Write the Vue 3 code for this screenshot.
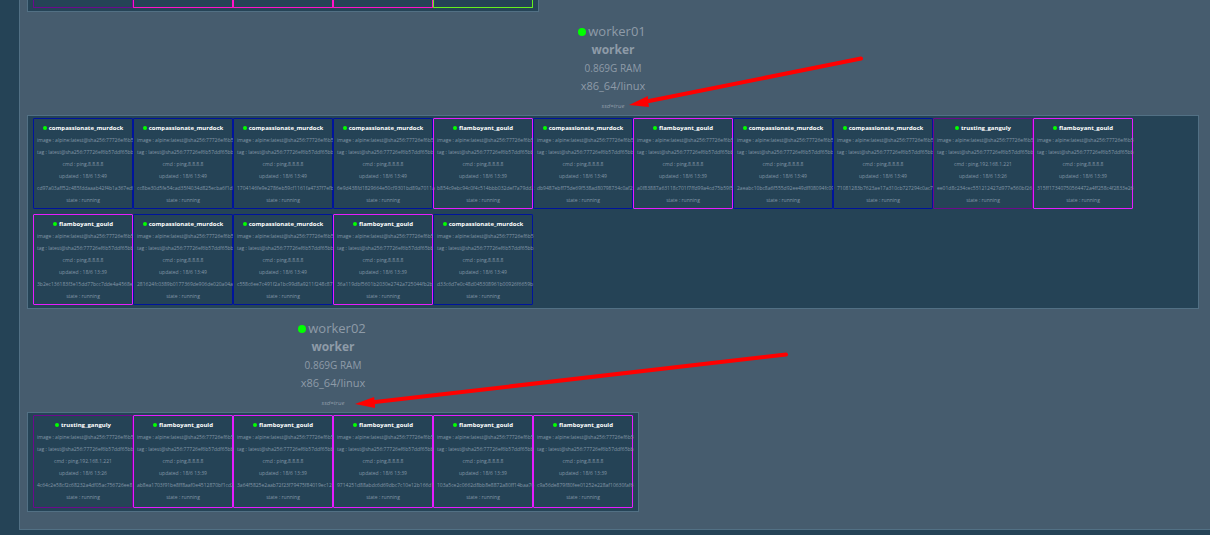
<script setup>
const kinds = {
  c: { name: 'compassionate_murdock', tone: 'blue', cmd: 'ping,8.8.8.8', updated: '18/6 13:49' },
  f: { name: 'flamboyant_gould', tone: 'magenta', cmd: 'ping,8.8.8.8', updated: '18/6 13:39' },
  t: { name: 'trusting_ganguly', tone: 'purple', cmd: 'ping,192.168.1.221', updated: '18/6 13:26' }
}
const task = (kind, id) => ({ ...kinds[kind], id })

const managerTones = ['purple', 'pink', 'pink', 'pink', 'green']

const workers = [
  {
    name: 'worker01',
    arrow: { shaft: 'M248 46.5 L36 89', head: '16,93 35,84 35,89 36,95' },
    tasks: [
      task('c', 'cd97a03aff52c485fddaaab42f4b1a367edf'),
      task('c', 'cc8be30d5fe54cad35f4034d825ecba6f1d'),
      task('c', '1704146fe9e2786eb59cf1161fa4737f7efb'),
      task('c', '6e9d438fd1829664e50cf9301bd89a7011a'),
      task('f', 'b854c9ebc94c0f4c514bbb032def7a79dd2'),
      task('c', 'db9487ebff75de69f538ad80798734c0af2'),
      task('f', 'a0f83887a63118c701f7ffd99a4cd75b59f5'),
      task('c', '2aeabc10bc8a6f555d92ee49dff08094fc09'),
      task('c', '71081283b7623ae17a310cb727294c0ac7'),
      task('t', 'ee01d8c234cec551212427d977e560bf26'),
      task('f', '315ff17340750564472a4ff258c4f2833e26'),
      task('f', '3b2ec136183f3e15dd77bcc7dde4a4568e'),
      task('c', '281624fc0389b0177369de906de020a04a'),
      task('c', 'c558c6ee7c491f2a1bc99d8a9211f248c87'),
      task('f', '36a119dbf5601b2030e2742a725044fb2b'),
      task('c', 'd33c6d7e0c48d045308961b00926f6659b')
    ]
  },
  {
    name: 'worker02',
    roomy: true,
    arrow: { shaft: 'M453 45.5 L42 93', head: '22,95 41,88 42,93 42,99' },
    tasks: [
      task('t', '4c64c2e58cf2c68232a4df05ac756726ee8'),
      task('f', 'ab8ea1703f91be8ff8aaf0e4512870bf1cd2'),
      task('f', '3a64f5825e2aab72f23f79475f84019ec12'),
      task('f', '9714251d88abdc6d69dbc7c10e12b166d1'),
      task('f', '103a5ce2c0662d8bb8e8872a80ff14baa76'),
      task('f', 'c9a56de879f80fee01252e228af10630faf6')
    ]
  }
]
</script>

<template>
  <main class="cluster">
    <div class="box clipped">
      <div v-for="(tone, i) in managerTones" :key="i" class="stub" :class="tone"></div>
    </div>

    <section v-for="w in workers" :key="w.name" class="worker" :class="{ roomy: w.roomy }">
      <header class="head">
        <h2 class="name"><i class="dot"></i>{{ w.name }}</h2>
        <div class="role">worker</div>
        <div class="ram">0.869G RAM</div>
        <div class="arch">x86_64/linux</div>
        <div class="label">ssd=true</div>
        <svg class="arrow" width="1" height="1" aria-hidden="true">
          <path :d="w.arrow.shaft" stroke="#f00" stroke-width="4" stroke-linecap="round" />
          <polygon :points="w.arrow.head" fill="#f00" />
        </svg>
      </header>
      <div class="box">
        <article v-for="t in w.tasks" :key="t.id" class="task" :class="t.tone">
          <h3 class="title"><i class="dot"></i>{{ t.name }}</h3>
          <div>image : alpine:latest@sha256:77726ef6b5</div>
          <div>tag : latest@sha256:77726ef6b57ddf65bb</div>
          <div>cmd : {{ t.cmd }}</div>
          <div>updated : {{ t.updated }}</div>
          <div>{{ t.id }}</div>
          <div>state : running</div>
        </article>
      </div>
    </section>
  </main>
</template>

<style>
body {
  background: #254356;
}
</style>

<style scoped>
.cluster {
  margin-left: 19px;
  padding: 0 11px 17px 7px;
  border: 1px solid #527084;
  border-width: 0 0 1px 1px;
  background: #465c6e;
  color: #8e9ba8;
  font-family: "Open Sans", "Noto Sans", sans-serif;
  overflow: hidden;
}
.worker {
  width: fit-content;
  max-width: 100%;
}
.box {
  box-sizing: border-box;
  display: flex;
  flex-wrap: wrap;
  row-gap: 5px;
  padding: 2px 5px 3px;
  border: 1px solid #527084;
  background: #254356;
}
.clipped {
  width: fit-content;
  padding-top: 0;
  border-top: 0;
}
.stub {
  box-sizing: border-box;
  width: 100px;
  height: 8px;
  border: 1px solid;
  border-top: 0;
  border-radius: 0 0 1px 1px;
}
.head {
  position: relative;
  box-sizing: border-box;
  height: 103px;
  padding-top: 10px;
  text-align: center;
  line-height: 18px;
}
.name {
  display: flex;
  justify-content: center;
  align-items: center;
  gap: 2px;
  margin: 0;
  padding-right: 2px;
  font-size: 13px;
  font-weight: 400;
  line-height: 19px;
}
.name .dot {
  width: 8px;
  height: 8px;
}
.dot {
  border-radius: 50%;
  background: #0f0;
}
.role {
  font-size: 12px;
  font-weight: 700;
}
.ram {
  font-size: 10px;
}
.arch {
  font-size: 11px;
}
.label {
  font-size: 6px;
  font-style: italic;
  line-height: 22px;
}
.arrow {
  position: absolute;
  top: 0;
  left: 50%;
  overflow: visible;
  pointer-events: none;
}
.task {
  box-sizing: border-box;
  width: 100px;
  padding: 3px 0 2px 3px;
  border: 1px solid;
  border-radius: 1px;
  text-align: center;
  white-space: nowrap;
  font-size: 5px;
  line-height: 12px;
}
.roomy .task {
  padding-bottom: 4px;
}
.task div {
  padding-right: 3px;
  color: #8497a7;
}
.title {
  display: flex;
  justify-content: center;
  align-items: center;
  gap: 2px;
  margin: 0;
  padding-right: 3px;
  color: #fff;
  font-size: 6px;
  font-weight: 700;
}
.title .dot {
  width: 4px;
  height: 4px;
}
.blue {
  border-color: #00149c;
}
.magenta {
  border-color: #e61cff;
}
.purple {
  border-color: #6c0a8c;
}
.pink {
  border-color: #ff14c8;
}
.green {
  border-color: #66f01e;
}
</style>
